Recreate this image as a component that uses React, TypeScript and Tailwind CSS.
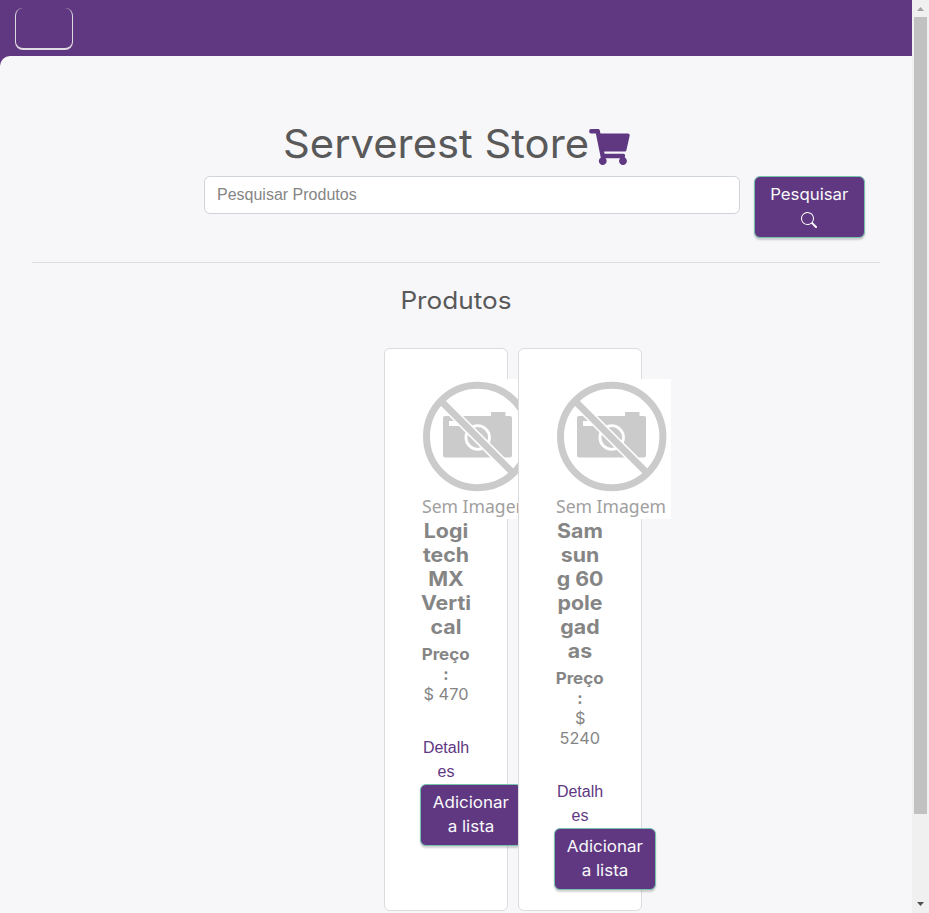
import React from 'react';

function Cart() {
  return (
    <svg viewBox="0 0 576 512" width="41" height="36" className="mt-[5px] -ml-[2px] shrink-0 fill-[#603882]" aria-hidden="true">
      <path d="M528.12 301.319l47.273-208C578.806 78.301 567.391 64 551.99 64H159.208l-9.166-44.81C147.758 8.021 137.93 0 126.529 0H24C10.745 0 0 10.745 0 24v16c0 13.255 10.745 24 24 24h69.883l70.248 343.435C147.325 417.1 136 435.222 136 456c0 30.928 25.072 56 56 56s56-25.072 56-56c0-15.674-6.447-29.835-16.824-40h209.647C430.447 426.165 424 440.326 424 456c0 30.928 25.072 56 56 56s56-25.072 56-56c0-22.172-12.888-41.332-31.579-50.405l5.517-24.276c3.413-15.018-8.002-29.319-23.403-29.319H218.117l-6.545-32h293.145c11.206 0 20.92-7.754 23.403-18.681z" />
    </svg>
  );
}

function SearchIcon() {
  return (
    <svg viewBox="0 0 16 16" width="16" height="16" className="fill-white" aria-hidden="true">
      <path d="M11.742 10.344a6.5 6.5 0 1 0-1.397 1.398h-.001c.03.04.062.078.098.115l3.85 3.85a1 1 0 0 0 1.415-1.414l-3.85-3.85a1.007 1.007 0 0 0-.115-.1zM12 6.5a5.5 5.5 0 1 1-11 0 5.5 5.5 0 0 1 11 0z" />
    </svg>
  );
}

function NoImage() {
  return (
    <svg viewBox="0 0 117 140" width="117" height="140" className="block h-[140px] w-[117px] max-w-none bg-white" aria-label="Sem Imagem">
      <rect x="23" y="37" width="69" height="41.500" rx="2" fill="#cbcbcb" />
      <rect x="71" y="33" width="14.500" height="7" fill="#cbcbcb" />
      <path d="M29 42h16v5h-16z" fill="#fff" />
      <circle cx="57.7" cy="58.500" r="11.800" fill="none" stroke="#fff" strokeWidth="2.800" />
      <path d="M20.500 21.500L93.500 94.500" stroke="#fff" strokeWidth="10" />
      <path d="M20.500 21.500L93.500 94.500" stroke="#cbcbcb" strokeWidth="6.800" />
      <circle cx="57.7" cy="57.500" r="51.200" fill="none" stroke="#cbcbcb" strokeWidth="7" />
      <text x="2" y="134" fontSize="17.500" textLength="110" lengthAdjust="spacingAndGlyphs" fill="#a0a0a0" fontFamily="Noto Sans, sans-serif">Sem Imagem</text>
    </svg>
  );
}

const buttonClass =
  'rounded-[6px] border border-[#76c4ae] bg-[#603882] font-[Inter,sans-serif] text-base leading-6 font-normal text-[#fafafa] shadow-[0_2px_2px_rgba(0,0,0,0.18)]';

type ProductProps = { title: string[]; price: string[] };

function ProductCard({ title, price }: ProductProps) {
  return (
    <article className="relative h-[563px] w-[124px] rounded-[6px] border border-[#dcdcdd] bg-white px-[35px] pt-[30px]">
      <NoImage />
      <h5 className="flex scale-x-[1.065] flex-col items-center text-[20px] leading-6 font-bold whitespace-nowrap text-[#858585]">
        {title.map((line) => <span key={line}>{line}</span>)}
      </h5>
      <div className="mt-[5px] flex flex-col items-center text-base leading-5 whitespace-nowrap text-[#858585]">
        <b className="scale-x-[1.06] font-bold">Preço</b>
        <b className="font-bold">:</b>
        {price.map((line) => <span key={line} className="scale-x-[1.02]">{line}</span>)}
      </div>
      <a className="mt-8 flex flex-col items-center font-['Liberation_Sans',Arial,sans-serif] text-base leading-6 text-[#603882]">
        <span>Detalh</span>
        <span>es</span>
      </a>
      <button className={`${buttonClass} flex h-[62px] w-[102px] flex-col items-center justify-center pb-[2px] whitespace-nowrap`}>
        <span className="scale-x-[1.06]">Adicionar</span>
        <span className="scale-x-[1.06]">a lista</span>
      </button>
    </article>
  );
}

export default function App() {
  return (
    <div className="flex h-[913px] w-[929px] overflow-hidden bg-[#603882] font-[Inter,sans-serif]">
      <div className="flex w-[912px] flex-col">
        <nav className="h-14 shrink-0 pt-2 pl-[15px]">
          <div className="h-[42px] w-[58px] rounded-[8px] border-x border-b-2 border-[#dedbe2]" />
        </nav>
        <main className="flex flex-1 flex-col items-center rounded-tl-[10px] bg-[#f7f7fa]">
          <h1 className="mt-[64px] flex h-12 items-center text-[40px] leading-[48px] font-normal text-[#595959]">
            <span className="w-[308px] whitespace-nowrap"><span className="inline-block origin-left scale-x-[1.045]">Serverest Store</span></span>
            <Cart />
          </h1>
          <div className="mt-2 flex w-full items-start pl-[204px]">
            <div className="flex h-[38px] w-[536px] items-center rounded-[6px] border border-[#ced4da] bg-white px-3 font-['Liberation_Sans',Arial,sans-serif] text-base text-[#858585]">Pesquisar Produtos</div>
            <button className={`${buttonClass} ml-[14px] flex h-[62px] w-[111px] flex-col items-center justify-center pb-[2px]`}>
              <span className="scale-x-[1.05]">Pesquisar</span>
              <span className="flex h-6 items-center pt-1 pr-[2px]"><SearchIcon /></span>
            </button>
          </div>
          <div className="mt-6 h-px w-[848px] bg-[#dcdcdf]" />
          <h2 className="mt-[23px] mb-px scale-x-[1.09] text-[24px] leading-[29px] font-normal text-[#595959]">Produtos</h2>
          <section className="mt-8 flex w-full gap-[10px] pl-[384px]">
            <ProductCard title={['Logi', 'tech', 'MX', 'Verti', 'cal']} price={['$ 470']} />
            <ProductCard title={['Sam', 'sun', 'g 60', 'pole', 'gad', 'as']} price={['$', '5240']} />
          </section>
        </main>
      </div>
      <aside className="flex w-[17px] flex-col items-center bg-[#f0f0f0]">
        <svg className="h-[17px] w-[17px] shrink-0" viewBox="0 0 17 17"><path d="M5 11h7L8.5 7z" fill="#a3a3a3" /></svg>
        <div className="h-[797px] w-[13px] bg-[#c1c1c1]" />
        <div className="flex-1" />
        <svg className="h-[17px] w-[17px] shrink-0" viewBox="0 0 17 17"><path d="M5 6h7l-3.500 4z" fill="#505050" /></svg>
      </aside>
    </div>
  );
}
